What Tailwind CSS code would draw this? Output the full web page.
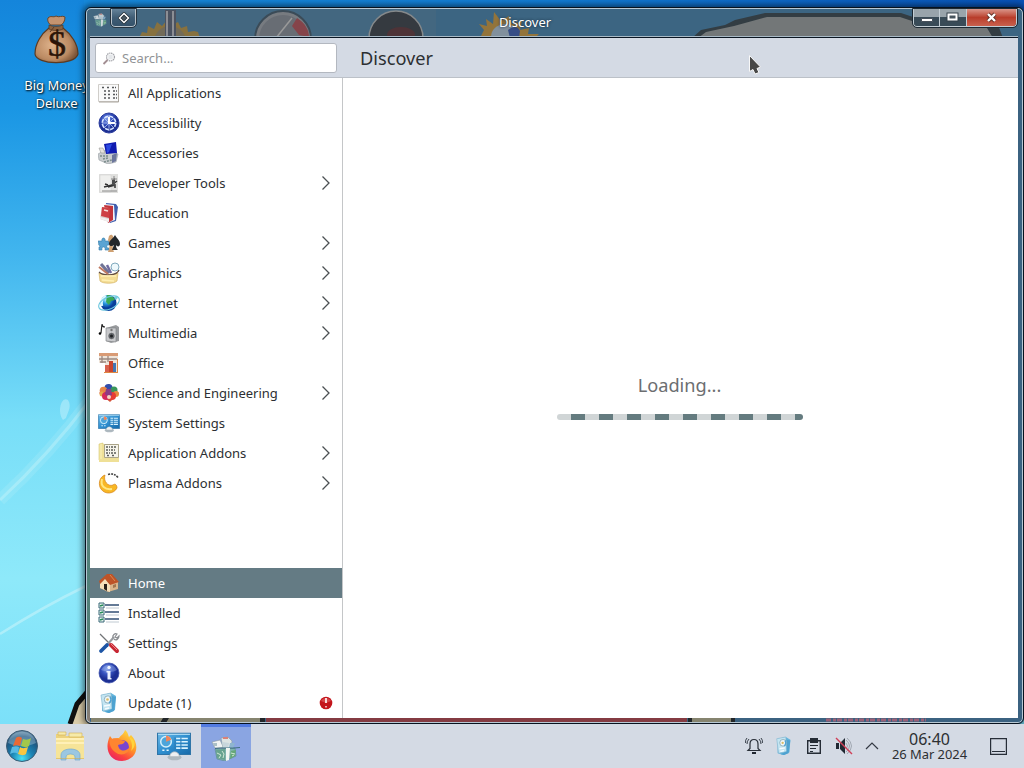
<!DOCTYPE html>
<html lang="en">
<head>
<meta charset="utf-8">
<title>Discover</title>
<script src="https://cdn.jsdelivr.net/npm/@tailwindcss/browser@4"></script>
</head>
<body class="overflow-hidden">
<svg width="0" height="0" class="absolute">
<defs>
<linearGradient id="sky" x1="0" y1="0" x2="0" y2="1"><stop offset="0" stop-color="#1485db"/><stop offset=".15" stop-color="#1a96e4"/><stop offset=".35" stop-color="#41b5ee"/><stop offset=".58" stop-color="#78def8"/><stop offset=".8" stop-color="#8ee9fa"/><stop offset="1" stop-color="#7be0f9"/></linearGradient>
<linearGradient id="topsky"><stop offset="0" stop-color="#1689dc"/><stop offset=".5" stop-color="#127dd5"/><stop offset="1" stop-color="#0852b8"/></linearGradient>
<radialGradient id="bluball" cx=".4" cy=".3"><stop offset="0" stop-color="#7f9be8"/><stop offset=".55" stop-color="#3450bd"/><stop offset="1" stop-color="#1c2f93"/></radialGradient>
<radialGradient id="globe" cx=".35" cy=".3"><stop offset="0" stop-color="#b5ecff"/><stop offset=".5" stop-color="#2798df"/><stop offset="1" stop-color="#083f9c"/></radialGradient>
<radialGradient id="orb" cx=".5" cy=".9" r=".95"><stop offset="0" stop-color="#48e0f4"/><stop offset=".35" stop-color="#1c85b5"/><stop offset=".75" stop-color="#1d4e78"/><stop offset="1" stop-color="#8aa9bd"/></radialGradient>
<radialGradient id="bag" cx=".4" cy=".5" r=".6"><stop offset="0" stop-color="#dfb38c"/><stop offset=".7" stop-color="#bb8a62"/><stop offset="1" stop-color="#80583a"/></radialGradient>
<linearGradient id="fox" x1=".8" y1="0" x2=".2" y2="1"><stop offset="0" stop-color="#ffe141"/><stop offset=".45" stop-color="#ff9328"/><stop offset=".75" stop-color="#fb4340"/><stop offset="1" stop-color="#e81e66"/></linearGradient>
<linearGradient id="panel" x1="0" y1="0" x2="1" y2="1"><stop offset="0" stop-color="#6fbce9"/><stop offset=".5" stop-color="#2f8fd0"/><stop offset="1" stop-color="#1769a8"/></linearGradient>
<symbol id="chev" viewBox="0 0 10 16"><path d="M1.500 1.500 8 8l-6.500 6.500" fill="none" stroke="#4b5053" stroke-width="1.300"/></symbol>
<symbol id="control" viewBox="0 0 32 28"><path d="M.5 2h31v20H.5z" fill="url(#panel)" stroke="#2f75a8"/><path d="M1 3h30" stroke="#b8e3f7"/><circle cx="8.500" cy="10" r="5" fill="#4da5da" stroke="#d5f0fb" stroke-width="1.400"/><path d="M8.500 10V4a6 6 0 0 1 5 4z" fill="#f0855a"/><path d="M18 7h11M18 10h11M18 13h11M18 16h11" stroke="#d9f3ff" stroke-width="1.500"/><path d="M17 6v11M22.500 6v11" stroke="#2c7db7"/><path d="M5 18h2m2 0h2" stroke="#e6f8ff" stroke-width="1.500"/><ellipse cx="16.500" cy="24.500" rx="6.500" ry="3" fill="#aeb9c0"/><path d="M12 24c0-6 9-6 9 0z" fill="#edf0f2" stroke="#a3adb4" stroke-width=".6"/></symbol>
<symbol id="update" viewBox="0 0 22 22"><path d="m4 3 9-2 5 3-1 14-6 3-7-2z" fill="#63b5dd"/><path d="m3 3 10-2 1 16-9 2z" fill="#c4e5f2" stroke="#7db2cb" stroke-width=".6"/><path d="m14 4 4 1-2 14-5 2-4-1 7-3z" fill="#4ea2d0"/><circle cx="10" cy="7.500" r="3.700" fill="#f0f7f8" stroke="#7ba0ae" stroke-width=".8"/><path d="M12 5a4 4 0 0 1-1 6" fill="none" stroke="#4da3d5" stroke-width="1.500"/><circle cx="9.500" cy="7.500" r="1.300" fill="#d9bb66"/><path d="m6 14 6-1m-5 4 4-1" stroke="#f6fcff" stroke-width="1.500"/></symbol>
<symbol id="store" viewBox="0 0 30 26"><path d="m4 14 20-1 1 8-11 5-8-2z" fill="#7fb3ad" stroke="#5b878f" stroke-width=".6"/><path d="m1 7 8-2 4 8H4z" fill="#f0f3f3" stroke="#8999a0" stroke-width=".6"/><path d="M2 8h4v3H3z" fill="#aabfc5"/><path d="m10 3 7-1 4 4-1 7h-8z" fill="#dde4e3" stroke="#8798a0" stroke-width=".6"/><path d="m12 3 5 0" stroke="#d98279" stroke-width="2"/><path d="m11 7 7 1-1 5h-5z" fill="#c8d6db"/><path d="m19 8 5 0-2 5h-4z" fill="#8eb5cf"/><path d="M4 13.500c8-1.500 15 .5 25-1" stroke="#3f6f80" stroke-width="1" fill="none"/><path d="m5 15 9-1v11l-8-2z" fill="#68a38f"/><path d="m15 13 4 0-1 12-3 1z" fill="#f2f6f2"/><path d="m20 16 5-1-1 6-5 3z" fill="#65a778"/><path d="m6 18 4 2-2 3m3-7 2 3-1 4m8-5 4 1m-3 2 2-1" stroke="#d0e8d6" fill="none"/></symbol>
</defs>
</svg>

<div class="w-[1024px] h-[768px] flex flex-col overflow-hidden font-['Noto_Sans',sans-serif] text-[13px] text-[#2c2f32]">
<main class="relative h-[724px] w-full overflow-hidden">
  <!-- wallpaper -->
  <svg class="absolute inset-0" width="1024" height="724">
    <rect width="1024" height="724" fill="url(#sky)"/><rect x="84" width="940" height="12" fill="url(#topsky)"/>
    <path d="M0 500C28 474 60 440 90 400" fill="none" stroke="#d4f7fa" stroke-opacity=".35" stroke-width="3"/>
    <path d="M0 500C28 474 60 440 90 400" fill="none" stroke="#d4f7fa" stroke-opacity=".15" stroke-width="12"/>
    <path d="M63 420c-6-8-2-24 5-20 4 6 0 12-2 18z" fill="#c6f2fb" opacity=".5"/>
    <path d="M0 634C30 615 55 601 86 586" fill="none" stroke="#bdf1fa" stroke-width="2.500" opacity=".7"/>
    <path d="M70 724 77 704 90 690v34z" fill="#d9cba9"/><path d="m70 724 7-20 12-14" fill="none" stroke="#111" stroke-width="5"/>
  </svg>

  <!-- desktop shortcut -->
  <div class="absolute left-[8px] top-[12px] w-24 flex flex-col items-center">
    <svg width="48" height="56" viewBox="0 0 48 56"><path d="M17 16C9 22 3 32 3 42c1 11 40 12 43 0 0-10-7-20-15-26z" fill="url(#bag)" stroke="#5c3a21" stroke-width="1.200"/><path d="M16 6c3-3 5 0 8-2 3 2 6-1 9 1 0 4-2 7-4 8H19c-2-1-4-4-3-7z" fill="#c49470" stroke="#68452b"/><path d="M17 13c4 2 10 2 14 0v4c-4 2-10 2-14 0z" fill="#8b623f" stroke="#553721" stroke-width=".7"/><path d="m22 15-4 5" stroke="#5d3b24"/><text x="25" y="44" text-anchor="middle" font-family="Liberation Serif" font-size="36" fill="#2b1407" stroke="#2b1407" stroke-width=".5">$</text></svg>
    <div class="mt-[8px] ml-px whitespace-nowrap text-center leading-[18px] text-white [text-shadow:1px_1px_2px_#000,0_0_2px_#0008]">Big Money<br>Deluxe</div>
  </div>

  <!-- application window -->
  <section class="absolute left-[85px] top-[7px] w-[939px] h-[717px] rounded-[6px] border border-[#07121e] bg-[#3b6281] overflow-hidden shadow-[0_0_6px_2px_rgba(0,0,0,.55)]">
    <svg class="absolute inset-0" width="937" height="715">
      <defs><linearGradient id="side" x1="0" y1="0" x2="0" y2="1"><stop offset="0" stop-color="#466c84"/><stop offset=".35" stop-color="#4a7b99"/><stop offset=".5" stop-color="#54837f"/><stop offset=".9" stop-color="#528078"/><stop offset="1" stop-color="#8b7d75"/></linearGradient></defs>
      <rect width="5" height="715" fill="url(#side)"/>
      <rect width="937" height="30" fill="#3c6582"/><rect width="350" height="30" fill="#47697f" opacity=".6"/>
      <path d="M53 30 56 24l5 1 1-7 6 3 3-7 5 4 5-6 5 5 6-3 3 6 6-2 1 6 6-1 4 1 2 6z" fill="#87713f"/><circle cx="84" cy="34" r="16" fill="#726b59"/><path d="M79 2h11v28H79z" fill="#4b5260"/><path d="M81 3v27M87 3v27" stroke="#8c8e94" stroke-width="2"/>
      <circle cx="197" cy="31" r="28" fill="#777b80" stroke="#3b4b57" stroke-width="2"/><circle cx="197" cy="31" r="24" fill="#686d74"/><path d="M211 10c8 5 12 12 12 19l-10-2-7-9z" fill="#85444a"/><path d="m190 30 16-20" stroke="#999" stroke-width="1.500"/>
      <circle cx="310" cy="30" r="27" fill="#353a40" stroke="#85898b" stroke-width="1.500"/><ellipse cx="315" cy="27" rx="14" ry="8" fill="#5c2f32" opacity=".65"/>
      <path d="m394 30 4-8-5-6 8 2-1-7 7 5 1-12 7 9 8-5 3 8 10-3-2 9 9-2-1 6 11 0-4 4z" fill="#93743b"/><ellipse cx="419" cy="29" rx="14" ry="13" fill="#81909d"/><path d="M422 22c5-4 10-4 12 1l-1 7h-9z" fill="#364d86"/>
      <path d="M606 30 615 22l24-5 10-5 30-7h136l12 4h82l8 21z" fill="#333d43"/><path d="M612 30 620 24l28-6 33-9h133l12 4 72 2 9 15z" fill="#737778"/>
      <path d="M4 710h932v5H4z" fill="#3b6281"/><path d="M5 710h172v5H5zM603 710h42v5h-42z" fill="#86846f"/><path d="M180 710h421v5H180z" fill="#843b42"/><path d="m74 715 3-5h6l-3 5m94 0v-5h5v5m423 0v-5h4v5m39 0v-5h4v5" fill="#222629"/><path d="M740 712h100" stroke="#996077" stroke-width="3" stroke-dasharray="5 2 3 1"/>
    </svg>
    <div class="relative size-full rounded-[5px] border border-[#b7c8d4] pl-[3px] pr-1 pb-1 flex flex-col">
      <div class="h-[29px] shrink-0 flex items-start justify-between relative -ml-[3px] -mr-1">
        <div class="flex">
          <svg class="ml-1.5 mt-[3px] opacity-80" width="16" height="15"><use href="#store"/></svg>
          <div class="ml-[2px] w-[25px] h-[18px] rounded-b-[4px] border border-t-0 border-[#b9c3ca] outline outline-[#25333f] bg-linear-to-b from-[#65839a] via-[#405d75] to-[#34526a] flex items-center justify-center">
            <svg width="12" height="12" viewBox="0 0 12 12"><path d="m6 1.500 4.500 4.500L6 10.500 1.500 6z" fill="#4c5860" stroke="#1f2a32" stroke-width="3"/><path d="m6 1.500 4.500 4.500L6 10.500 1.500 6z" fill="none" stroke="white" stroke-width="1.500"/></svg>
          </div>
        </div>
        <div class="absolute inset-x-0 top-[4px] text-center text-white text-[13px] leading-[18px] pr-[59px] [text-shadow:0_0_3px_#123]">Discover</div>
        <div class="relative mr-[5px] h-[18px] flex border border-t-0 border-[#c2cdd4] rounded-b-[4px] overflow-hidden outline outline-[#1c2933]">
          <div class="w-[26px] border-r border-[#c2cdd4] bg-linear-to-b from-[#99a4ab] from-45% to-[#394b57] to-50% flex justify-center"><svg width="14" height="18"><path d="M1.500 9.500h11v3h-11z" fill="#fff" stroke="#46505a"/></svg></div>
          <div class="w-[27px] border-r border-[#c2cdd4] bg-linear-to-b from-[#99a4ab] from-45% to-[#394b57] to-50% flex justify-center"><svg width="14" height="18"><path d="M2.500 5.500h8v5h-8z" fill="none" stroke="#35414a" stroke-width="4"/><path d="M2.500 5.500h8v5h-8z" fill="#48555e" stroke="white" stroke-width="2"/></svg></div>
          <div class="w-[49px] bg-linear-to-b from-[#d9958a] from-0% via-[#b83d2b] via-50% to-[#c9604d] flex justify-center"><svg width="14" height="18"><path d="m3 5 7 7m0-7-7 7" stroke="#613027" stroke-width="4"/><path d="m3 5 7 7m0-7-7 7" stroke="#fff" stroke-width="2.400"/></svg></div>
        </div>
        <div class="absolute left-[3px] right-1 bottom-0 h-[2px] border-t border-[#a8b9c5] bg-[#0b1623]"></div>
      </div>

      <div class="flex-1 flex flex-col bg-white min-h-0">
        <header class="h-10 shrink-0 flex items-center bg-[#d4dae4] border-b border-[#bcc1c8]">
          <div class="ml-[5px] w-[242px] h-[30px] rounded-[3px] border border-[#b3b8c0] bg-white flex items-center pl-[5px] text-[#919396] mt-px">
            <svg width="16" height="16" viewBox="0 0 16 16"><circle cx="9.500" cy="7" r="4" fill="#f4f5f6" stroke="#a4a5aa" stroke-width="1.200" stroke-dasharray="1.500 .6"/><path d="m6.500 10-4 4" stroke="#a28e92" stroke-width="1.800"/><path d="M7.500 6h4m-4 2h4" stroke="#d5d9de"/></svg>
            <span class="ml-[5px] text-[13px] leading-[20px]">Search...</span>
          </div>
          <h1 class="ml-[23px] text-[18.200px] leading-6 mt-px">Discover</h1>
        </header>
        <div class="flex-1 flex min-h-0">
          <nav class="w-[253px] border-r border-[#c4c6c8] flex flex-col justify-between">
            <ul>
              <li class="h-[30px] flex items-center px-2"><svg width="22" height="22" viewBox="0 0 22 22"><path d="M.5 2.500h20v17H.5z" fill="#fafafa" stroke="#d0ceca"/><path d="M20.500 2v18H1" fill="none" stroke="#aaa59d"/><path d="M4 5.500h3m2 0h3m2 0h4M6 9h3m1 0h3m2 0h4M6 12.500h3m1 0h3m2 0h4M6 16h3m1 0h3m2 0h4" stroke="#55575a" stroke-width="1.700" stroke-dasharray="2 1"/></svg><span class="ml-2 mt-px">All Applications</span></li>
              <li class="h-[30px] flex items-center px-2"><svg width="22" height="22" viewBox="0 0 22 22"><circle cx="11" cy="11" r="10" fill="url(#bluball)" stroke="#2b3c9d"/><circle cx="11" cy="11" r="6.700" fill="none" stroke="#d9e5ff" stroke-width="1.600" stroke-dasharray="4 1.300"/><path d="M11 3v16M4 11h14M6 6l10 10M16 6 6 16" stroke="#c5d5fa" stroke-width=".7"/><path d="M11 5v6h6" stroke="#fff" stroke-width="2" fill="none"/></svg><span class="ml-2 mt-px">Accessibility</span></li>
              <li class="h-[30px] flex items-center px-2"><svg width="22" height="22" viewBox="0 0 22 22"><path d="m0 12 7-4 13 4-2 8-8 2-9-4z" fill="#c9cdcf" stroke="#959ca1" stroke-width=".6"/><path d="m6 2 12-2 1 11-11 1z" fill="#101bb0"/><path d="m8 3 6-1-3 8-2 1z" fill="#2c4ae0"/><path d="M2 14h8M5 17l5-1m-4 4 8-2" stroke="#7b8c8b" stroke-width="1.500" stroke-dasharray="2 1"/><path d="m14 13 5-2-1 8-4 2z" fill="#6c769c"/><path d="M1 6h4l2 5H3z" fill="#e5e3dd" stroke="#888" stroke-width=".5"/></svg><span class="ml-2 mt-px">Accessories</span></li>
              <li class="h-[30px] flex items-center px-2"><svg width="22" height="22" viewBox="0 0 22 22"><path d="M1 2h19v19H1z" fill="#e0e0de"/><path d="M2 3h11v17H2z" fill="#efefed" stroke="#cfcfcd" stroke-width=".5"/><path d="m6 15 8-2 5-4M7 12l3 1m0 2 7-2v3" stroke="#333" stroke-width="1.500" fill="none"/><path d="m14 8 3-2 0 8-3-1z" fill="#4c4d4e"/><path d="M16 4v4m-3-1h6M4 19h15" stroke="#888"/></svg><span class="ml-2 mt-px">Developer Tools</span><svg class="ml-auto mr-[3px]" width="10" height="16"><use href="#chev"/></svg></li>
              <li class="h-[30px] flex items-center px-2"><svg width="22" height="22" viewBox="0 0 22 22"><path d="m8 1 10 1 2 3-2 14-6 2-3-4z" fill="#405fae"/><path d="m7 2 9 1 1 15-5 2z" fill="#eef0f8"/><path d="m6 3 9 1 0 14-5 3z" fill="#c3343b"/><path d="m4 5 7 1 0 14-9-3z" fill="#d8cbc9"/><path d="m4 5 8 1-1 10-8-2z" fill="#ce4045"/><path d="m2 15 9 2v3l-9-3z" fill="#f1eeee"/><path d="m6 8 4 1" stroke="#f6e1de" stroke-width="1.500"/></svg><span class="ml-2 mt-px">Education</span></li>
              <li class="h-[30px] flex items-center px-2"><svg width="22" height="22" viewBox="0 0 22 22"><path d="M0 9h4c-1-4 4-4 3 0h4v4c-3-1-3 4 0 3v2H7c1-4-4-4-3 0H1v-3c3 1-2-4 0-3z" fill="#5ba4d3" stroke="#327ba8" stroke-width=".6"/><path d="M11 4c3-3 5 0 4 4 0 5-1 7 1 12h-6c2-5 2-9 0-12z" fill="#cfa172"/><path d="M17 3c2 4 5 5 5 9 0 3-3 3-4 1 0 3 1 4 2 5h-6l2-5c-2 2-5 1-5-1 0-4 4-5 6-9z" fill="#22272b"/></svg><span class="ml-2 mt-px">Games</span><svg class="ml-auto mr-[3px]" width="10" height="16"><use href="#chev"/></svg></li>
              <li class="h-[30px] flex items-center px-2"><svg width="22" height="22" viewBox="0 0 22 22"><path d="M1 11c4 2 14 2 19 0l-1 8c-3 3-14 3-17 0z" fill="#f3dc93" stroke="#d5b568" stroke-width=".7"/><path d="M1 10c4 4 18 4 20-2" stroke="#614d43" stroke-width="1.200" fill="none"/><path d="m3 2 8 9" stroke="#6f7395" stroke-width="3"/><path d="m1 5 9 7" stroke="#bf7960" stroke-width="2"/><path d="m9 3 4 8" stroke="#6f6a9f" stroke-width="2.500"/><circle cx="17" cy="5" r="4" fill="#eef8fc" stroke="#81aabe"/><path d="m3 14 15 0M4 18l12 1" stroke="#fff0b5" stroke-width="1.500"/></svg><span class="ml-2 mt-px">Graphics</span><svg class="ml-auto mr-[3px]" width="10" height="16"><use href="#chev"/></svg></li>
              <li class="h-[30px] flex items-center px-2"><svg width="22" height="22" viewBox="0 0 22 22"><circle cx="10.500" cy="11" r="8" fill="url(#globe)"/><path d="M9 3c4 0 7 2 8 5l-4 1-2 4-3-3z" fill="#3ba955"/><path d="M8 4c-4 2-5 6-4 10" stroke="#d7f6ff" stroke-width="2.500" fill="none"/><ellipse cx="11" cy="11" rx="11" ry="6" transform="rotate(-25 11 11)" fill="none" stroke="#6dc7df" stroke-width="1.100"/><circle cx="18" cy="6" r="1.500" fill="#79d0df"/></svg><span class="ml-2 mt-px">Internet</span><svg class="ml-auto mr-[3px]" width="10" height="16"><use href="#chev"/></svg></li>
              <li class="h-[30px] flex items-center px-2"><svg width="22" height="22" viewBox="0 0 22 22"><path d="m8 6 10-3 3 2v14l-8 2-5-2z" fill="#989a9d"/><path d="m8 6 10 0v14l-10-1z" fill="#c8c9cc" stroke="#7b7d80" stroke-width=".6"/><circle cx="13.500" cy="14" r="3.700" fill="#626569" stroke="#eee" stroke-width=".7"/><circle cx="13.500" cy="14" r="1.500" fill="#1d1f22"/><circle cx="13.500" cy="8" r="1.200" fill="#777"/><path d="M3 11 4 2q0 3 3 3" stroke="#262626" stroke-width="1.200" fill="none"/><circle cx="2" cy="11.500" r="1.300"/></svg><span class="ml-2 mt-px">Multimedia</span><svg class="ml-auto mr-[3px]" width="10" height="16"><use href="#chev"/></svg></li>
              <li class="h-[30px] flex items-center px-2"><svg width="22" height="22" viewBox="0 0 22 22"><path d="M1 1h19v19H7v-9H1z" fill="#efe4d9"/><path d="M1 1h19v3H1z" fill="#d99b75"/><path d="M1 7h18M4 4v7m6-7v6M2 10h6" stroke="#9b8880" stroke-width="1.300"/><path d="M7 13h4v7H7z" fill="#d7604d"/><path d="M11 9h4v11h-4z" fill="#c9452e"/><path d="M15 11h3v9h-3z" fill="#4377b4"/><path d="M6 20.500h14M19.500 7v13" stroke="#df8843"/></svg><span class="ml-2 mt-px">Office</span></li>
              <li class="h-[30px] flex items-center px-2"><svg width="22" height="22" viewBox="0 0 22 22"><path d="m11 2 10 9-9 9L1 11z" fill="#d65138"/><circle cx="10.500" cy="6" r="4" fill="#304dac"/><circle cx="5.500" cy="8.500" r="3.800" fill="#e88645"/><circle cx="16" cy="8" r="3.500" fill="#39965a"/><circle cx="4" cy="12" r="2.500" fill="#e3a94c"/><circle cx="18" cy="12" r="3" fill="#e78b40"/><circle cx="8" cy="14" r="4" fill="#d4295c"/><circle cx="14" cy="14" r="4" fill="#e73c34"/><path d="m8 7 5 0 1 6-4 2-3-3z" fill="#8c3a85"/><circle cx="11" cy="15" r="2" fill="#f2d4c5"/></svg><span class="ml-2 mt-px">Science and Engineering</span><svg class="ml-auto mr-[3px]" width="10" height="16"><use href="#chev"/></svg></li>
              <li class="h-[30px] flex items-center px-2"><svg width="22" height="20"><use href="#control"/></svg><span class="ml-2 mt-px">System Settings</span></li>
              <li class="h-[30px] flex items-center px-2"><svg width="22" height="22" viewBox="0 0 22 22"><path d="m1 2 4-1v17H1z" fill="#f4e9a9" stroke="#ccb857" stroke-width=".5"/><path d="M4 2h17v18H1v-3h3z" fill="#efe097"/><path d="M6.500 2.500h14v13h-14z" fill="#f6f4ea" stroke="#aaa489"/><path d="M8 5h4m1 0h5M8 8h4m1 0h4M8 11h4m1 0h5M9 13.500h3m2 0h3" stroke="#5b5c58" stroke-width="1.400" stroke-dasharray="2 1"/></svg><span class="ml-2 mt-px">Application Addons</span><svg class="ml-auto mr-[3px]" width="10" height="16"><use href="#chev"/></svg></li>
              <li class="h-[30px] flex items-center px-2"><svg width="22" height="22" viewBox="0 0 22 22"><path d="M7 3C1 5 0 13 3 17c4 6 13 5 16-1 0-3-2-5-4-3-5 2-10-4-8-10z" fill="#f8b725" stroke="#d58217" stroke-width=".7"/><path d="M4 7c-2 7 3 11 10 10" stroke="#ffe781" stroke-width="2" fill="none"/><path d="M10 2.500q6-2 10 3" fill="none" stroke="#454545" stroke-width="1.600" stroke-dasharray="2 1"/></svg><span class="ml-2 mt-px">Plasma Addons</span><svg class="ml-auto mr-[3px]" width="10" height="16"><use href="#chev"/></svg></li>
            </ul>
            <ul>
              <li class="h-[30px] flex items-center px-2 bg-[#647b84] text-white"><svg width="22" height="22" viewBox="0 0 22 22"><path d="m2 10 7-6 11 5v8l-10 3-8-4z" fill="#d9b58b"/><path d="m2 10 5-4 5 6v8L2 16z" fill="#f5dfba"/><path d="m1 9 8-7 5 0 7 8-9 3-5-6-5 5z" fill="#bd5328"/><path d="M6 12h3v7l-3-2z" fill="#29201b"/><path d="m15 13 3-1v3l-3 1z" fill="#a1764f"/><path d="m12 3 5 6" stroke="#de8a4d"/></svg><span class="ml-2 mt-px">Home</span></li>
              <li class="h-[30px] flex items-center px-2"><svg width="22" height="22" viewBox="0 0 22 22"><path d="M7 3h14M7 10h14M7 17h14" stroke="#647a96" stroke-width="2"/><path d="M8 6h13M8 13h13M8 20h13" stroke="#c0cad2"/><g fill="#e8f4ef" stroke="#3b6879"><path d="M1 1h5v5H1zM1 8h5v5H1zM1 15h5v5H1z"/></g><path d="m2 4 3-1M2 11l3-1m-3 8 3-1" stroke="#258b57" stroke-width="1.500"/></svg><span class="ml-2 mt-px">Installed</span></li>
              <li class="h-[30px] flex items-center px-2"><svg width="22" height="22" viewBox="0 0 22 22"><path d="M2 2 12 12" stroke="#717477" stroke-width="1.300"/><path d="m9 13 7-8" stroke="#999da1" stroke-width="2"/><path d="M15 6c-1-3 2-5 4-4l-2 3 2 1 2-2c0 3-3 5-5 3" fill="none" stroke="#8b8e92" stroke-width="1.200"/><path d="m13 13 6 6" stroke="#c72733" stroke-width="4" stroke-linecap="round"/><path d="m9 13-6 6" stroke="#1d55a5" stroke-width="3.800" stroke-linecap="round"/><path d="m13 12 6 6" stroke="#ef8588"/></svg><span class="ml-2 mt-px">Settings</span></li>
              <li class="h-[30px] flex items-center px-2"><svg width="22" height="22" viewBox="0 0 22 22"><circle cx="11" cy="11" r="10" fill="url(#bluball)" stroke="#374aab" stroke-width=".7"/><path d="M3 8c4-7 12-7 16 0-5 3-10 2-16 0z" fill="#bdcffa" opacity=".3"/><circle cx="11" cy="5.500" r="1.700" fill="#eef4ff"/><path d="M8.500 9h4v7h1v1.500H9.500V10.500h-1z" fill="#eaf1ff"/></svg><span class="ml-2 mt-px">About</span></li>
              <li class="h-[30px] flex items-center px-2"><svg width="22" height="22"><use href="#update"/></svg><span class="ml-2 mt-px">Update (1)</span><svg class="ml-auto mr-px" width="14" height="14" viewBox="0 0 14 14"><circle cx="7" cy="7" r="6.300" fill="#c3141b"/><path d="M2 5c2-4 8-4 10 0L7 7z" fill="#ea7474" opacity=".5"/><path d="M7 2v5" stroke="#fff" stroke-width="1.600"/><path d="M7 10v1.500" stroke="#fff" stroke-width="1.300"/></svg></li>
            </ul>
          </nav>
          <div class="flex-1 flex flex-col items-center pt-[295px] pr-[2px]">
            <div class="text-[18.200px] leading-6 text-[#6c6e71]">Loading...</div>
            <div class="mt-[17px] w-[246px] h-[6px] rounded-full bg-[repeating-linear-gradient(90deg,#d0d5d6_0_14px,#647b7f_14px_28px)]"></div>
          </div>
        </div>
      </div>
    </div>
  </section>

  <svg class="absolute left-[748px] top-[54px]" width="14" height="22" viewBox="0 0 14 22"><path d="M1.500 1.500v16l3.500-2 2 4.500 4-1.500-2-4 3.500-1.500z" fill="#474747" stroke="#f8f8f8" stroke-width="1"/></svg>
</main>

<!-- taskbar -->
<footer class="h-11 shrink-0 flex items-center bg-[#d4dae4]">
  <svg class="ml-[5px]" width="34" height="34" viewBox="0 0 34 34"><circle cx="17" cy="17" r="15.500" fill="url(#orb)" stroke="#3c5c74"/><path d="M3 14C6-1 28-1 31 14c-8 4-20 4-28 0z" fill="#c9e1ee" opacity=".35"/><path d="M11 9c3-2 4-1 6 0l-2 8c-2-1-4-1-7 0z" fill="#ea6934"/><path d="M18 10c3 1 5 1 8-1l-2 8c-3 2-5 1-8 0z" fill="#a2c84b"/><path d="M7 18c3-1 5-1 7 0l-1 7c-3-2-5-1-8 0z" fill="#58b9e3"/><path d="M15 18c3 2 5 1 8 0l-2 7c-3 2-5 1-8 0z" fill="#f8c642"/></svg>
  <svg class="ml-[16px]" width="30" height="32" viewBox="0 0 30 32"><path d="M1 4h8l2 2h18v23H1z" fill="#ecd27c"/><path d="M3 2h8v3H3zM14 3h13v4H14z" fill="#f6eaa9" stroke="#d3af52" stroke-width=".6"/><path d="M1 9h28v20H1z" fill="#f6e498"/><path d="M1 9h28M1 13h28" stroke="#fff0b7" stroke-width="2"/><path d="M6 30v-5c0-8 19-8 19 0v5h-5v-3c0-4-9-4-9 0v3z" fill="#9bc7e2" stroke="#74abd0" stroke-width=".7"/><path d="M1 28.500h28" stroke="#d2a946" opacity=".5"/></svg>
  <svg class="ml-[21px]" width="32" height="34" viewBox="0 0 32 34"><path d="M4 7c1 1 2 3 3 4 2-2 4-2 6-2 2-3 5-4 6-8 3 2 3 5 4 7l2-2c9 9 7 25-9 26C3 32-2 19 4 7z" fill="url(#fox)"/><circle cx="16" cy="18" r="7" fill="#7945cf"/><path d="M4 11c5-4 9 0 15 1-1 4-5 3-7 4 1 7 8 7 12 2-1 7-9 10-15 5-4-3-6-8-5-12z" fill="#ff8530"/><path d="M23 8c3 5 4 9 2 14 6-5 4-12-2-14z" fill="#ffd33c"/></svg>
  <svg class="ml-[19px]" width="34" height="30"><use href="#control"/></svg>
  <div class="ml-[10px] w-[50px] h-11 bg-[#8aa5e2] border-t-[3px] border-[#527be0] flex items-center justify-center"><svg width="30" height="26"><use href="#store"/></svg></div>
  <div class="ml-auto flex items-center h-full">
    <svg width="18" height="18" viewBox="0 0 18 18"><path d="M3 13.500h12l-2-2V7c0-3-1.500-4.500-4-4.500S5 4 5 7v4.500z" fill="none" stroke="#292f38" stroke-width="1.200"/><path d="M7 15h4v2H7z" fill="#202731"/><path d="M4 2Q2 4 2 7M2 1Q0 3 0.600 6M14 2q2 2 2 5m0-6q2 2 1.400 5" fill="none" stroke="#38404a"/></svg>
    <svg class="ml-[11px]" width="20" height="22"><use href="#update"/></svg>
    <svg class="ml-[12px]" width="16" height="18" viewBox="0 0 16 18"><path d="M1.700 3.700h12.600v12.600H1.700z" fill="none" stroke="#252c35" stroke-width="1.400"/><path d="M4 1h8v5H4zM4 8h8v1H4zm0 3h6v1H4zm0 3h3v1H4z" fill="#252c35"/></svg>
    <svg class="ml-[13px]" width="18" height="18" viewBox="0 0 18 18"><path d="M1 6h3v6H1zM5 6l5-5v16l-5-5z" fill="#202832"/><path d="M11 6q3 3 0 6m0-9q7 6 0 12m1-14q9 8 0 16" fill="none" stroke="#a1a8b2"/><path d="m1 1 16 16" stroke="#cf4058" stroke-width="1.400"/></svg>
    <svg class="ml-[12px]" width="14" height="10" viewBox="0 0 14 10"><path d="m1 8 6-6 6 6" fill="none" stroke="#343a44" stroke-width="1.200"/></svg>
    <div class="ml-[12px] w-[77px] text-center whitespace-nowrap"><div class="text-[16px] leading-[15px]">06:40</div><div class="text-[12.900px] leading-[14px]">26 Mar 2024</div></div>
    <svg class="ml-[22px] mr-[17px]" width="17" height="17"><path d="M.6.600h15.800v15.800H.6z" fill="none" stroke="#272e38" stroke-width="1.200"/><path d="M2 13.500h13" stroke="#272e38"/></svg>
  </div>
</footer>
</div>
</body>
</html>
